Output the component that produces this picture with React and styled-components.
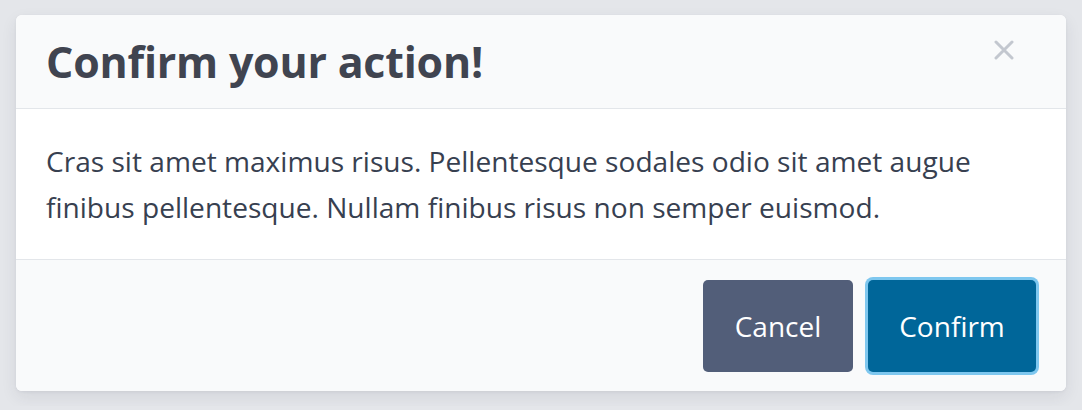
import React from "react";
import styled, { createGlobalStyle } from "styled-components";

const Global = createGlobalStyle`
  html, body { margin: 0; padding: 0; background: #e4e6ea; }
  body { font-family: "Open Sans", "Noto Sans", sans-serif; }
  * { box-sizing: border-box; }
`;

const Page = styled.div`
  padding: 15px 16px;
  display: flex;
`;

const Card = styled.div`
  flex: 1;
  background: #ffffff;
  border-radius: 6px;
  overflow: hidden;
  box-shadow: 0 6px 16px rgba(40, 48, 70, 0.09), 0 1px 3px rgba(40, 48, 70, 0.06);
`;

const Header = styled.div`
  display: flex;
  align-items: flex-start;
  justify-content: space-between;
  background: #f9fafb;
  border-bottom: 1px solid #e3e6ea;
  padding: 26px 52px 0 30px;
  height: 94px;
`;

const Title = styled.h2`
  margin: 0;
  font-size: 42.9px;
  line-height: 1;
  font-weight: 700;
  color: #404450;
  letter-spacing: -0.2px;
`;

const Close = styled.button`
  border: 0;
  background: transparent;
  padding: 0;
  margin-top: -1px;
  width: 20px;
  height: 20px;
  cursor: pointer;
  display: flex;
`;

const Body = styled.div`
  padding: 30px 30px 0 30px;
  height: 151px;
  border-bottom: 1px solid #e3e6ea;
`;

const Text = styled.p`
  margin: 0;
  font-size: 28.1px;
  line-height: 45.6px;
  color: #374050;
`;

const Footer = styled.div`
  background: #f9fafb;
  display: flex;
  justify-content: flex-end;
  align-items: center;
  gap: 15px;
  padding: 20px 30px 19px;
`;

const Button = styled.button`
  height: 92px;
  width: ${(p) => p.$w}px;
  border-radius: 5px;
  border: 0;
  font-family: inherit;
  font-size: 28px;
  color: #ffffff;
  background: ${(p) => p.$bg};
  box-shadow: ${(p) => (p.$focus ? "0 0 0 3px #7ec7ef" : "none")};
  cursor: pointer;
`;

export default function App() {
  return (
    <>
      <Global />
      <Page>
        <Card>
          <Header>
            <Title>Confirm your action!</Title>
            <Close aria-label="Close">
              <svg width="20" height="20" viewBox="0 0 20 20">
                <path d="M2 2 L18 18 M18 2 L2 18" stroke="#c3c7cf" strokeWidth="3" strokeLinecap="round" />
              </svg>
            </Close>
          </Header>
          <Body>
            <Text>
              Cras sit amet maximus risus. Pellentesque sodales odio sit amet augue finibus pellentesque. Nullam finibus risus non semper euismod.
            </Text>
          </Body>
          <Footer>
            <Button $w={150} $bg="#525e79">Cancel</Button>
            <Button $w={168} $bg="#006699" $focus>Confirm</Button>
          </Footer>
        </Card>
      </Page>
    </>
  );
}
